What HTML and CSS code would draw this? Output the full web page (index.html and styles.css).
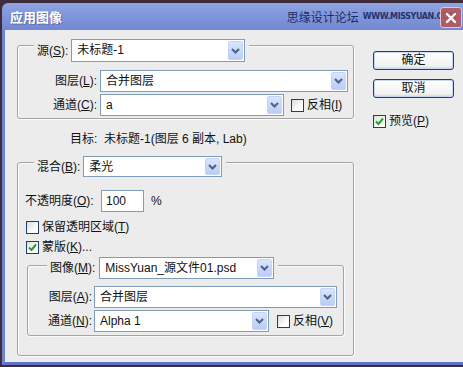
FILE: index.html
```html
<!DOCTYPE html>
<html lang="zh-CN">
<head>
    <meta charset="UTF-8">
    <title>应用图像</title>
    <link rel="stylesheet" href="styles.css">
</head>
<body>
    <div class="window">
        <div class="titlebar">
            <span class="title">应用图像</span>
            <span class="watermark">思缘设计论坛 <b>www.MISSYUAN.COM</b></span>
            <span class="close-btn">
                <svg viewBox="0 0 20 20" width="20" height="20"><path d="M6 6 L14 14 M14 6 L6 14" stroke="#fff" stroke-width="2.4" stroke-linecap="round"/></svg>
            </span>
        </div>

        <div class="dialog">
            <div class="main">
                <!-- source -->
                <div class="group group-source">
                    <div class="legend legend-source">
                        <span class="lbl">源(<u>S</u>):</span>
                        <div class="combo combo-src">
                            <span class="combo-value">未标题-1</span>
                            <span class="combo-btn"><svg viewBox="0 0 9 6" width="9" height="6"><path d="M1 1 L4.5 4.5 L8 1" /></svg></span>
                        </div>
                    </div>
                    <div class="row row-first">
                        <span class="row-label lbl-src">图层(<u>L</u>):</span>
                        <div class="combo combo-src-layer">
                            <span class="combo-value">合并图层</span>
                            <span class="combo-btn"><svg viewBox="0 0 9 6" width="9" height="6"><path d="M1 1 L4.5 4.5 L8 1" /></svg></span>
                        </div>
                    </div>
                    <div class="row">
                        <span class="row-label lbl-src">通道(<u>C</u>):</span>
                        <div class="combo combo-src-channel">
                            <span class="combo-value">a</span>
                            <span class="combo-btn"><svg viewBox="0 0 9 6" width="9" height="6"><path d="M1 1 L4.5 4.5 L8 1" /></svg></span>
                        </div>
                        <label class="check check-invert-src"><span class="box"></span>反相(<u>I</u>)</label>
                    </div>
                </div>

                <div class="target">目标:&nbsp; 未标题-1(图层 6 副本, Lab)</div>

                <!-- blending -->
                <div class="group group-blend">
                    <div class="legend legend-blend">
                        <span class="lbl">混合(<u>B</u>):</span>
                        <div class="combo combo-blend">
                            <span class="combo-value">柔光</span>
                            <span class="combo-btn"><svg viewBox="0 0 9 6" width="9" height="6"><path d="M1 1 L4.5 4.5 L8 1" /></svg></span>
                        </div>
                    </div>
                    <div class="opacity-row">
                        <span class="opacity-label">不透明度(<u>O</u>):</span>
                        <span class="text-input">100</span>
                        <span class="percent">%</span>
                    </div>
                    <label class="check check-row check-first"><span class="box"></span>保留透明区域(<u>T</u>)</label>
                    <label class="check check-row"><span class="box checked"><svg viewBox="0 0 11 11" width="11" height="11"><path d="M2 5.5 L4.5 8 L9 2.5" /></svg></span>蒙版(<u>K</u>)...</label>

                    <!-- mask -->
                    <div class="group group-mask">
                        <div class="legend legend-mask">
                            <span class="lbl">图像(<u>M</u>):</span>
                            <div class="combo combo-mask">
                                <span class="combo-value">MissYuan_源文件01.psd</span>
                                <span class="combo-btn"><svg viewBox="0 0 9 6" width="9" height="6"><path d="M1 1 L4.5 4.5 L8 1" /></svg></span>
                            </div>
                        </div>
                        <div class="row row-mask-first">
                            <span class="row-label lbl-mask">图层(<u>A</u>):</span>
                            <div class="combo combo-mask-layer">
                                <span class="combo-value">合并图层</span>
                                <span class="combo-btn"><svg viewBox="0 0 9 6" width="9" height="6"><path d="M1 1 L4.5 4.5 L8 1" /></svg></span>
                            </div>
                        </div>
                        <div class="row">
                            <span class="row-label lbl-mask">通道(<u>N</u>):</span>
                            <div class="combo combo-mask-channel">
                                <span class="combo-value">Alpha 1</span>
                                <span class="combo-btn"><svg viewBox="0 0 9 6" width="9" height="6"><path d="M1 1 L4.5 4.5 L8 1" /></svg></span>
                            </div>
                            <label class="check check-invert-mask"><span class="box"></span>反相(<u>V</u>)</label>
                        </div>
                    </div>
                </div>
            </div>

            <div class="side">
                <button class="xp-btn">确定</button>
                <button class="xp-btn btn-cancel">取消</button>
                <label class="check check-preview"><span class="box checked"><svg viewBox="0 0 11 11" width="11" height="11"><path d="M2 5.5 L4.5 8 L9 2.5" /></svg></span>预览(<u>P</u>)</label>
            </div>
        </div>
    </div>
</body>
</html>
```

FILE: styles.css
```css
/* XP style "Apply Image" dialog */
body {
    margin: 0;
    background: #3f2c3a;
    font-family: "Liberation Sans", "Noto Sans CJK SC", sans-serif;
    font-size: 12px;
    line-height: 16px;
    color: #111;
    overflow: hidden;
}

.window {
    padding: 3px 0 0 2px;
    width: 461px;
}

.titlebar {
    position: relative;
    height: 27px;
    display: flex;
    align-items: center;
    background: linear-gradient(#8ea3e1, #7c93d8 60%, #7289d2);
    border-radius: 6px 0 0 0;
}

.title {
    margin-left: 8px;
    font-family: "Noto Sans CJK SC", sans-serif;
    font-size: 13px;
    font-weight: 700;
    color: #fff;
    text-shadow: 1px 1px 0 #5a6cad;
}

.watermark {
    margin-left: auto;
    margin-right: 7px;
    font-family: "Noto Sans CJK SC", sans-serif;
    font-size: 12px;
    color: #1d2b6b;
    display: flex;
    align-items: center;
    gap: 4px;
}

.watermark b {
    font-family: "DejaVu Sans", sans-serif;
    font-size: 8px;
    letter-spacing: -0.4px;
    text-transform: uppercase;
    color: #27336e;
}

.close-btn {
    position: absolute;
    right: 1px;
    top: 4px;
    width: 20px;
    height: 19px;
    border-radius: 3px;
    background: rgba(180, 86, 88, 0.88);
    border: 1px solid #e3c4cf;
    display: flex;
    align-items: center;
    justify-content: center;
}

.dialog {
    display: flex;
    height: 332px;
    background: #ececec;
    border-left: 3px solid #7085cf;
    border-bottom: 3px solid #5f72c4;
}

.main {
    width: 349px;
    flex-shrink: 0;
    padding-left: 12px;
    box-sizing: border-box;
}

/* group boxes */
.group {
    border: 1px solid #a4a4a4;
    border-radius: 3px;
    box-shadow: inset 1px 1px 0 #fbfbfb, 1px 1px 0 #fbfbfb;
}

.group-source {
    margin-top: 15px;
    padding-bottom: 2px;
}

.group-blend {
    margin-top: 15px;
    height: 194px;
    box-sizing: border-box;
}

.group-mask {
    margin: 8px 9px 0 9px;
    padding-bottom: 3px;
}

.legend {
    display: flex;
    align-items: center;
    width: max-content;
    background: #ececec;
    padding: 0 4px 0 3px;
}

.legend-source { margin: -7px 0 0 16px; }
.legend-blend { margin: -7px 0 0 16px; }
.legend-mask { margin: -9px 0 0 19px; }

.lbl { margin-right: 3px; }
.legend-mask .lbl { margin-right: 4px; }

u { text-decoration: underline; text-underline-offset: 1px; }

/* combo boxes */
.combo {
    display: flex;
    height: 22px;
    box-sizing: border-box;
    border: 1px solid #7f9db9;
    background: #fff;
}

.combo-value {
    flex: 1;
    padding-left: 5px;
    line-height: 20px;
    white-space: nowrap;
    overflow: hidden;
}

.combo-btn {
    width: 15px;
    margin: 1px;
    border-radius: 2px;
    background: linear-gradient(#dbe5fc, #b9cdf6);
    border: 1px solid #c3d3f6;
    box-sizing: border-box;
    display: flex;
    align-items: center;
    justify-content: center;
}

.combo-btn path {
    fill: none;
    stroke: #4d6185;
    stroke-width: 2;
}

.combo-src { width: 174px; height: 23px; }
.combo-src-layer { width: 248px; }
.combo-src-channel { width: 184px; }
.combo-blend { width: 139px; height: 21px; }
.combo-mask { width: 175px; }
.combo-mask-layer { width: 243px; }
.combo-mask-channel { width: 175px; }

/* rows */
.row {
    display: flex;
    align-items: center;
    margin-top: 2px;
}

.row-first { margin-top: 8px; }
.row-mask-first { margin-top: 7px; }

.row-label {
    text-align: right;
    white-space: nowrap;
}

.lbl-src { width: 79px; margin-right: 3px; }
.lbl-mask { width: 64px; margin-right: 2px; }

.target {
    margin-top: 12px;
    padding-left: 53px;
    line-height: 16px;
}

.opacity-row {
    display: flex;
    align-items: center;
    margin-top: 13px;
    padding-left: 7px;
}

.opacity-label { width: 76px; white-space: nowrap; }

.text-input {
    width: 43px;
    height: 22px;
    box-sizing: border-box;
    border: 1px solid #7f9db9;
    background: #fff;
    padding-left: 4px;
    line-height: 20px;
}

.percent { margin-left: 7px; }

/* checkboxes */
.check {
    display: flex;
    align-items: center;
    white-space: nowrap;
}

.box {
    width: 13px;
    height: 13px;
    box-sizing: border-box;
    border: 1px solid #1c3f6e;
    background: linear-gradient(135deg, #dcdcd7, #fff 70%);
    margin-right: 3px;
    display: flex;
    align-items: center;
    justify-content: center;
}

.box path {
    fill: none;
    stroke: #21a121;
    stroke-width: 2;
}

.check-row {
    height: 20px;
    padding-left: 8px;
}

.check-first { margin-top: 5px; }

.check-invert-src { margin-left: 7px; }
.check-invert-mask { margin-left: 8px; }

/* right column */
.side {
    margin-left: 19px;
    display: flex;
    flex-direction: column;
    align-items: flex-start;
}

.xp-btn {
    width: 81px;
    height: 19px;
    margin-top: 21px;
    padding: 0;
    font: inherit;
    line-height: 15px;
    color: #111;
    border: 1px solid #1f3f78;
    border-radius: 3px;
    background: linear-gradient(#ffffff, #f2f2ee 80%, #d8d8d0);
    box-shadow: inset 0 0 0 1px #c8d6f4;
}

.btn-cancel { margin-top: 9px; }

.check-preview { margin-top: 15px; }
```
